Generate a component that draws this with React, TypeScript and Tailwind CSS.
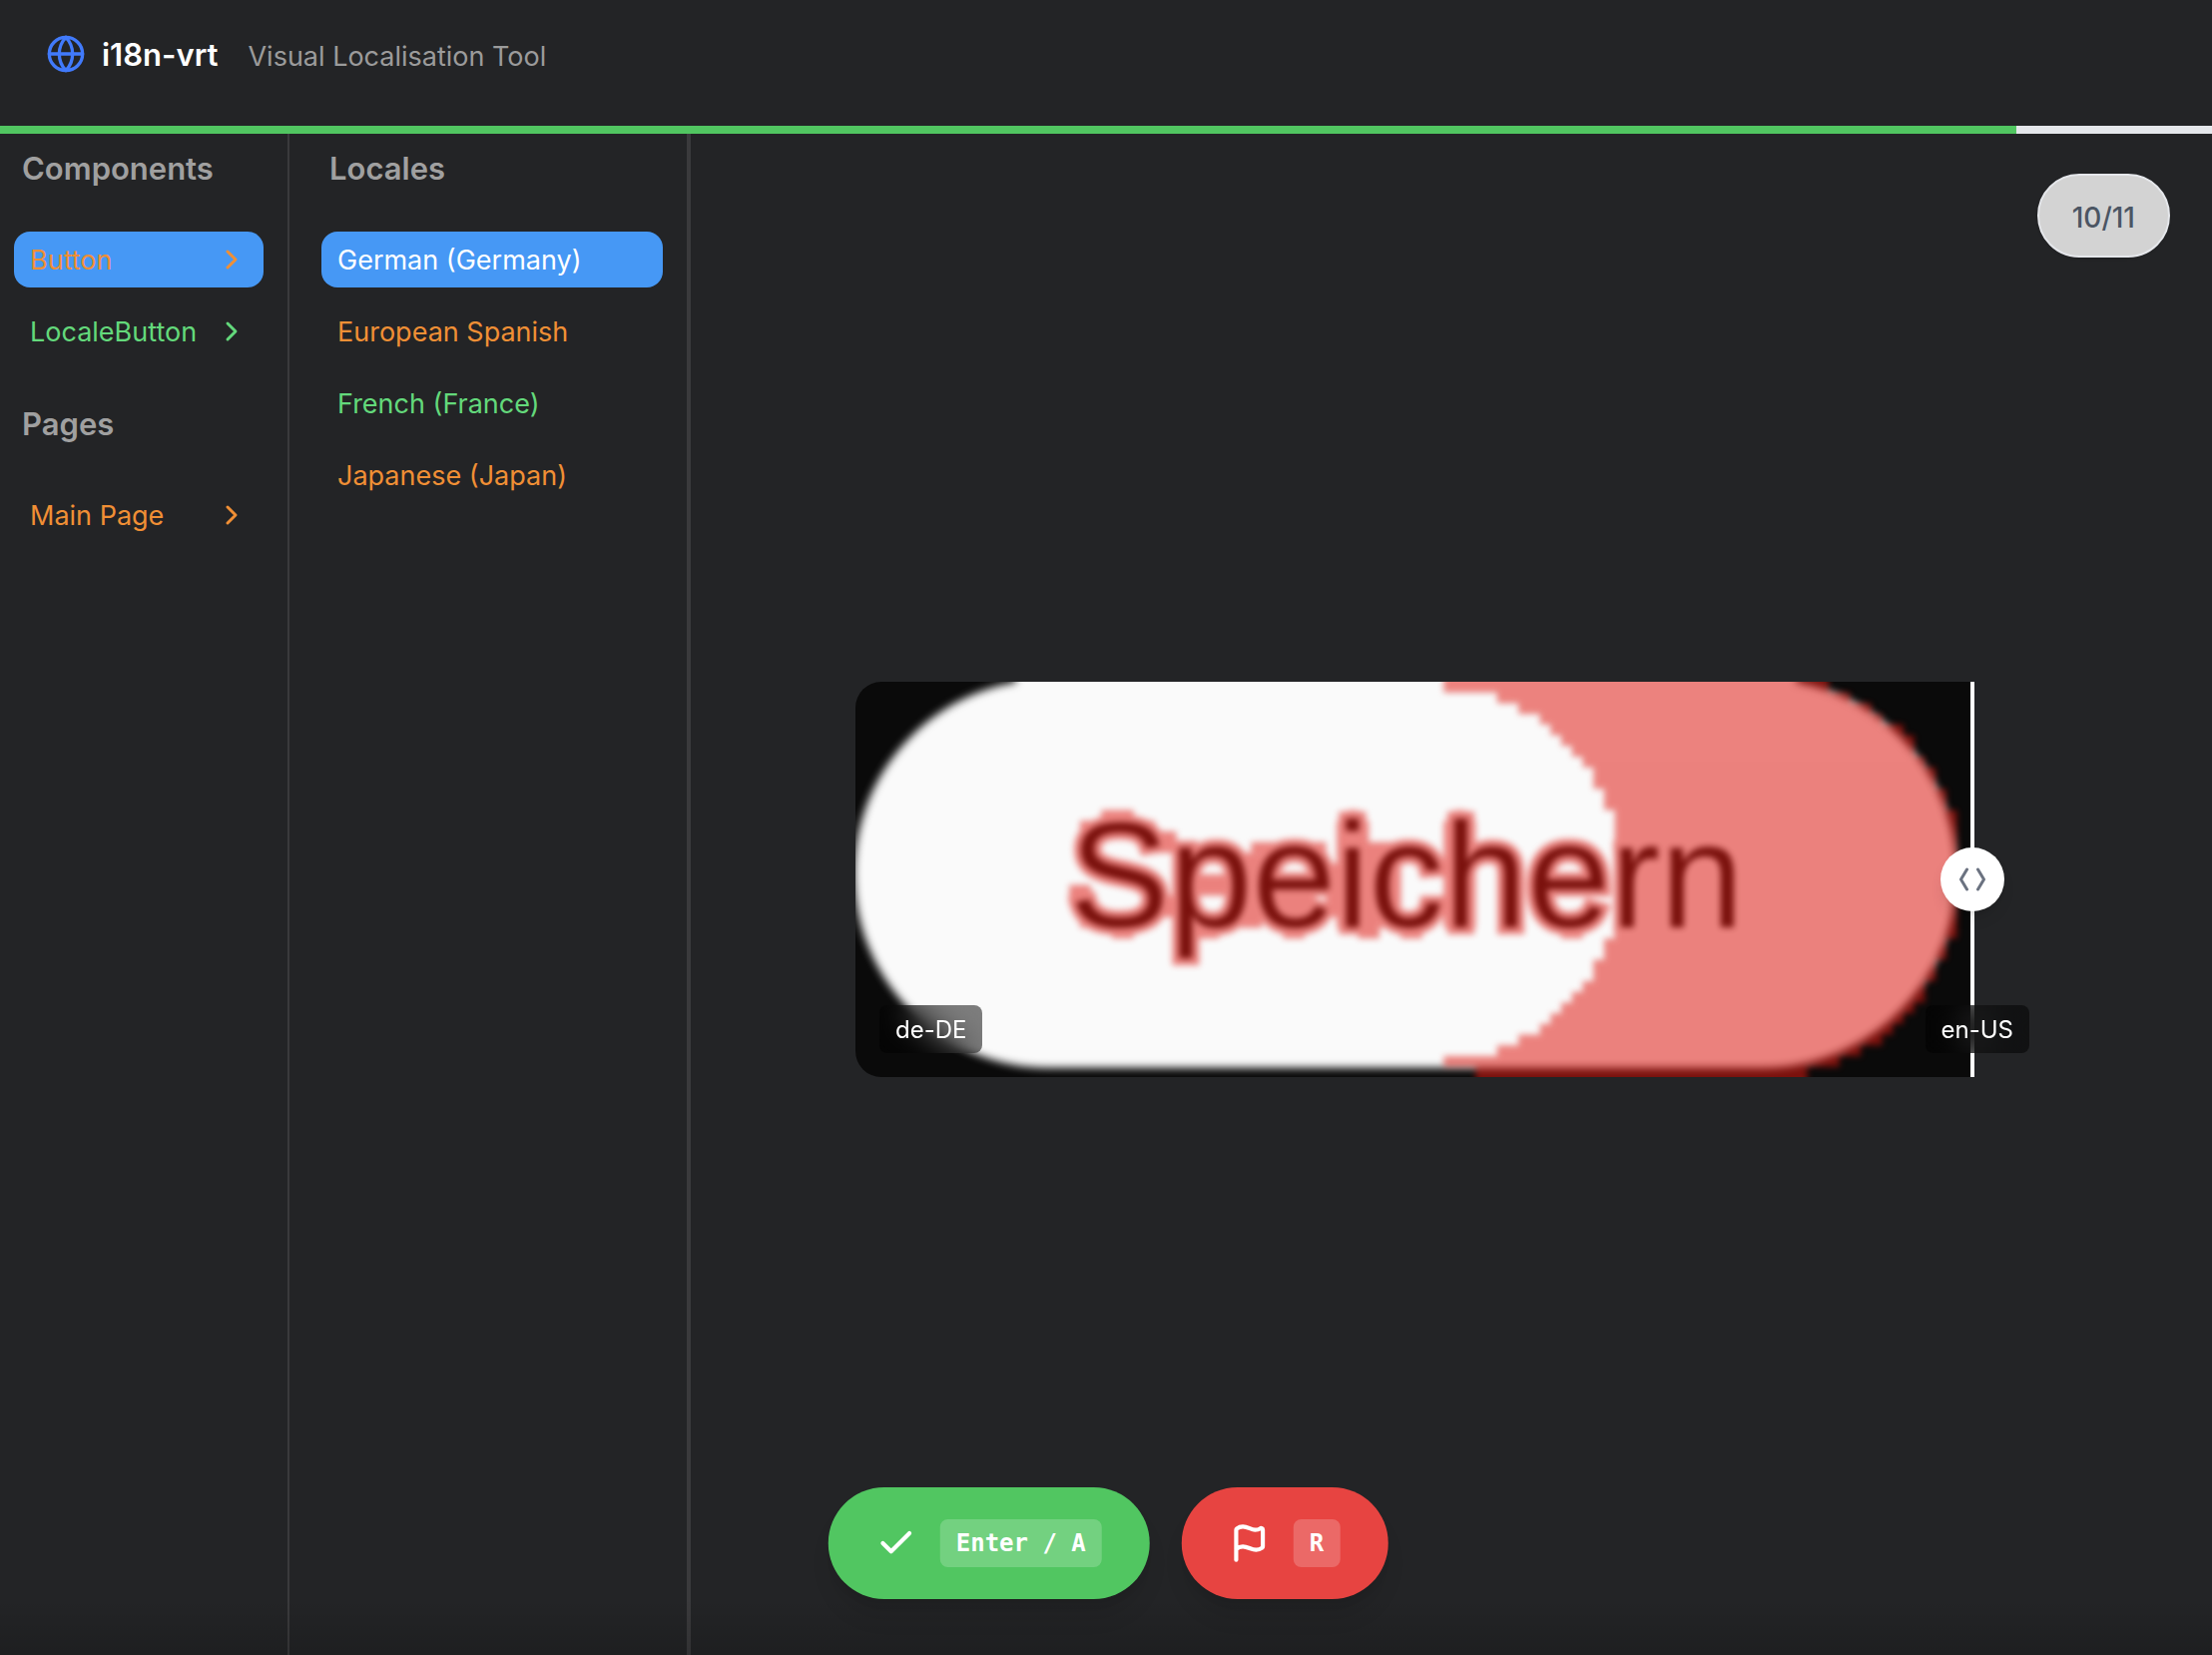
import { Check, ChevronRight, Flag, Globe } from "lucide-react";

type Status = "pending" | "done";

const statusText: Record<Status, string> = {
  pending: "text-[#f08f35]",
  done: "text-[#63d97b]",
};

const groups: { title: string; items: { name: string; status: Status; selected?: boolean }[] }[] = [
  {
    title: "Components",
    items: [
      { name: "Button", status: "pending", selected: true },
      { name: "LocaleButton", status: "done" },
    ],
  },
  { title: "Pages", items: [{ name: "Main Page", status: "pending" }] },
];

const locales: { name: string; status: Status; selected?: boolean }[] = [
  { name: "German (Germany)", status: "pending", selected: true },
  { name: "European Spanish", status: "pending" },
  { name: "French (France)", status: "done" },
  { name: "Japanese (Japan)", status: "pending" },
];

/* First and last changed column of every pixel row in the 112 x 37 capture. */
const diffRows: [number, number][] = [
  [55, 91], [60, 93], [62, 95], [64, 96], [65, 98], [66, 99], [67, 99], [68, 100],
  [69, 101], [69, 101], [70, 102], [70, 102],
  [71, 103], [71, 103], [71, 103], [71, 103], [71, 103], [71, 103],
  [71, 103], [71, 103], [71, 103], [71, 103], [71, 103], [71, 103],
  [70, 102], [70, 102], [69, 101], [69, 101], [68, 100], [67, 100], [66, 99], [65, 98],
  [64, 97], [62, 96], [60, 94], [55, 92], [58, 89],
];

/* One closed outline: down the right-hand steps, then back up the left-hand ones. */
const rowTop = (row: number) => (row === 0 ? -3 : row);
const rowBottom = (row: number) => (row === diffRows.length - 1 ? 40 : row + 1);
const diffOutline =
  "M" +
  [
    ...diffRows.map(([, to], row) => `${to} ${rowTop(row)} ${to} ${rowBottom(row)}`),
    ...diffRows.map(([from], row) => `${from} ${rowBottom(row)} ${from} ${rowTop(row)}`).reverse(),
  ].join(" ") +
  "Z";

/* Changed pixels around and between the letters: x, y, width, height. */
const diffPatches: [number, number, number, number][] = [
  [23, 12, 3, 1], [21, 13, 7, 1], [20, 19, 2, 2], [21, 22, 7, 1], [24, 23, 2, 1], [28, 20, 2, 2], [28, 14, 2, 2],
  [32, 18, 3, 2], [32, 23, 2, 1], [36, 16, 2, 7], [37, 15, 7, 1], [39, 20, 4, 3], [40, 23, 2, 1],
  [44, 17, 2, 5], [46, 12, 1, 1], [45, 13, 3, 10], [47, 15, 2, 9], [49, 15, 2, 8],
  [51, 23, 2, 1], [55, 13, 3, 10], [56, 12, 1, 1], [66, 23, 2, 1],
];

function Capture() {
  return (
    <svg viewBox="0 0 112 37" className="block w-full" role="img" aria-label="Speichern button, changed pixels in red">
      <defs>
        <filter id="soft" x="-5%" y="-10%" width="110%" height="120%" colorInterpolationFilters="sRGB">
          <feGaussianBlur stdDeviation="0.28" />
        </filter>
        <filter id="softer" x="-5%" y="-10%" width="110%" height="120%" colorInterpolationFilters="sRGB">
          <feGaussianBlur stdDeviation="0.38" />
        </filter>
      </defs>
      <rect width="112" height="37" fill="#0a0a0a" />
      <g filter="url(#softer)">
        <rect x="-0.1" y="-0.2" width="103" height="36.3" rx="18.1" fill="#fafafa" />
        <rect x="15" y="-3" width="73" height="4" fill="#fafafa" />
      </g>
      <text x="20" y="23" fontSize="14" fontFamily="'Liberation Sans', Arial, sans-serif" fill="#0a0a0a" filter="url(#soft)">
        Speichern
      </text>
      <g filter="url(#soft)" opacity="0.53" fill="#df1810">
        <path d={diffOutline} />
        {diffPatches.map(([x, y, width, height]) => (
          <rect key={`${x}-${y}`} x={x} y={y} width={width} height={height} />
        ))}
        <text x="20" y="23" fontSize="14" fontFamily="'Liberation Sans', Arial, sans-serif" stroke="#df1810" strokeWidth="1.3" aria-hidden="true">
          Speichern
        </text>
      </g>
    </svg>
  );
}

function Heading({ children }: { children: string }) {
  return <h2 className="px-2 pt-0.5 text-[31px] leading-[46px] font-semibold text-[#a0a0a0]">{children}</h2>;
}

function Kbd({ children }: { children: string }) {
  return (
    <kbd className="rounded-lg bg-white/20 px-4 font-['DejaVu_Sans_Mono',monospace] text-[24px] leading-[48px] font-bold">
      {children}
    </kbd>
  );
}

export default function App() {
  return (
    <div className="relative flex min-h-screen flex-col bg-[#232426] font-['Inter',sans-serif] text-white">
      <header className="flex h-[126px] items-center pb-[18px] pl-[46px]">
        <Globe className="size-10 text-[#417afb]" />
        <h1 className="ml-4 pt-0.5 text-[31px] leading-10 font-semibold">i18n-vrt</h1>
        <p className="ml-[30px] pt-1.5 text-[27px] leading-10 text-[#9b9b9b]">Visual Localisation Tool</p>
      </header>
      <div className="h-2 bg-[#e5e7eb]" role="progressbar" aria-valuenow={10} aria-valuemax={11} aria-label="Reviewed">
        <div className="h-full w-[91.15%] bg-[#51c661]" />
      </div>

      <div className="flex flex-1">
        <nav className="flex w-[290px] shrink-0 flex-col gap-10 border-r-2 border-[#3a3a3c] pt-2.5 pr-6 pl-3.5">
          {groups.map((group) => (
            <section key={group.title}>
              <Heading>{group.title}</Heading>
              <ul className="mt-10 flex flex-col gap-4">
                {group.items.map((item) => (
                  <li key={item.name}>
                    <button
                      className={`flex h-14 w-full items-center justify-between rounded-2xl px-4 text-[27px] leading-10 ${statusText[item.status]} ${item.selected ? "bg-[#4698f5]" : ""}`}
                    >
                      <span className="pt-0.5">{item.name}</span>
                      <ChevronRight className="size-8 shrink-0" strokeWidth={2.2} />
                    </button>
                  </li>
                ))}
              </ul>
            </section>
          ))}
        </nav>

        <nav className="w-[402px] shrink-0 border-r-4 border-[#3a3a3c] pt-2.5 pr-6 pl-8">
          <Heading>Locales</Heading>
          <ul className="mt-10 flex flex-col gap-4">
            {locales.map((locale) => (
              <li key={locale.name}>
                <button
                  className={`flex h-14 w-full items-center rounded-2xl px-4 pt-0.5 text-left text-[27px] leading-10 ${locale.selected ? "bg-[#4698f5] text-white" : statusText[locale.status]}`}
                >
                  {locale.name}
                </button>
              </li>
            ))}
          </ul>
        </nav>

        <main className="relative flex min-w-0 flex-1 items-center justify-center pb-[30px] pl-1.5">
          <div className="absolute top-10 right-[42px] rounded-full border-2 border-[#e5e7eb] bg-[#d3d3d3] px-[33px] pt-[22px] pb-[18px] text-[28px] leading-10 font-medium text-[#4b5563] shadow-sm">
            10/11
          </div>

          <div className="relative w-[1200px]">
            <div className="overflow-hidden rounded-[26px] [clip-path:inset(0_6.75%_0_0)]">
              <Capture />
            </div>
            <div className="absolute inset-y-0 left-[93.25%] w-1 -translate-x-1/2 bg-white" />
            <span className="absolute bottom-6 left-6 rounded-lg bg-black/50 px-4 pt-0.5 text-[24px] leading-[46px] backdrop-blur-lg">de-DE</span>
            <span className="absolute right-6 bottom-6 rounded-lg bg-black/50 px-4 pt-0.5 text-[24px] leading-[46px] backdrop-blur-lg">en-US</span>
            <button
              aria-label="Drag to compare"
              className="absolute top-1/2 left-[93.25%] flex size-16 -translate-x-1/2 -translate-y-1/2 items-center justify-center rounded-full bg-white text-[#6b7280] shadow-lg"
            >
              <svg viewBox="0 0 28 24" className="w-7" fill="none" stroke="currentColor" strokeWidth="3" strokeLinecap="round" strokeLinejoin="round">
                <path d="M8.5 2 2.5 12l6 10M19.5 2l6 10-6 10" />
              </svg>
            </button>
          </div>
        </main>
      </div>

      <div className="absolute bottom-14 left-1/2 flex -translate-x-1/2 gap-8 pl-1">
        <button aria-label="Accept" className="flex items-center gap-6 rounded-full bg-[#51c661] px-12 py-8 shadow-xl">
          <Check className="size-10" strokeWidth={2.5} />
          <Kbd>Enter / A</Kbd>
        </button>
        <button aria-label="Reject" className="flex items-center gap-6 rounded-full bg-[#e74441] px-12 py-8 shadow-xl">
          <Flag className="size-10" strokeWidth={2.5} />
          <Kbd>R</Kbd>
        </button>
      </div>
      <div className="pointer-events-none absolute inset-x-0 bottom-0 h-14 bg-linear-to-t from-black/15 to-transparent" />
    </div>
  );
}
